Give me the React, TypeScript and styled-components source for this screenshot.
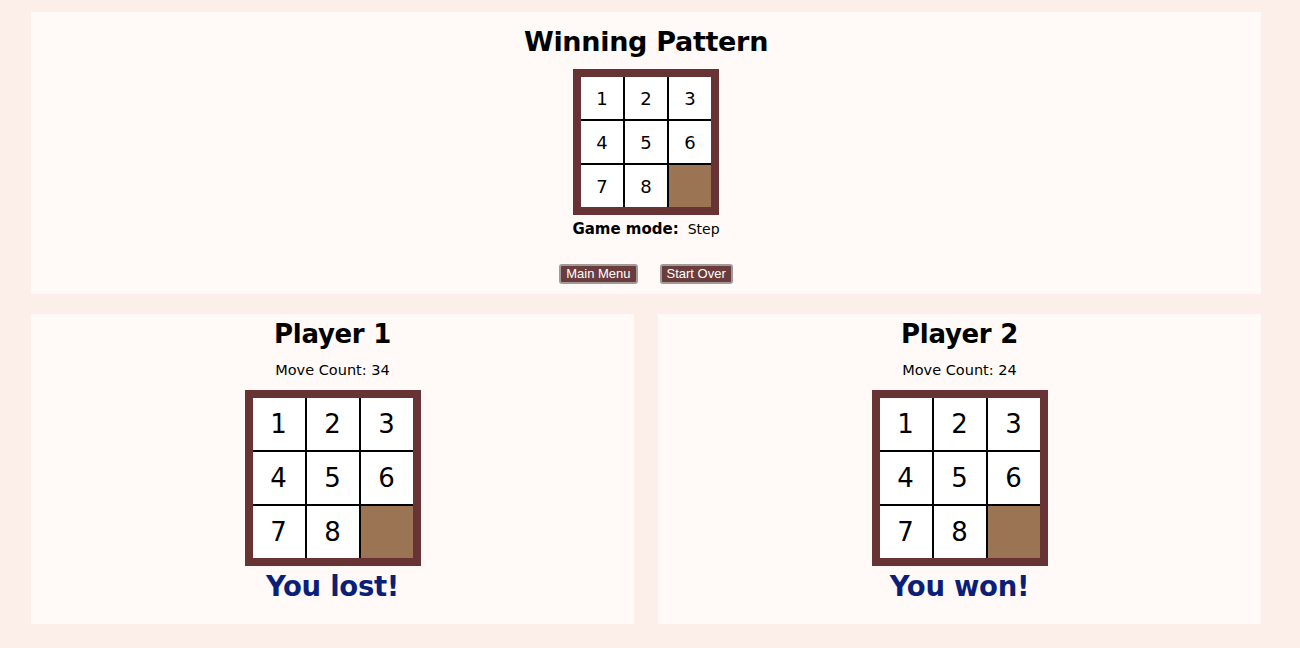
import React from "react";
import styled, { createGlobalStyle } from "styled-components";

const Global = createGlobalStyle`
  html, body { margin: 0; padding: 0; background: #fcefea; }
  body { font-family: "DejaVu Sans", "Noto Sans", sans-serif; color: #000; }
`;

const Page = styled.div`
  width: 1230px;
  padding: 12px 0 24px 31px;
  display: flex;
  flex-direction: column;
  gap: 20px;
`;

const Panel = styled.section<{ $h: number }>`
  background: #fffaf7;
  height: ${(p) => p.$h}px;
  display: flex;
  flex-direction: column;
  align-items: center;
  box-sizing: border-box;
`;

const Row = styled.div`
  display: grid;
  grid-template-columns: 1fr 1fr;
  gap: 24px;
`;

const Title = styled.h1<{ $size: number; $mt: number }>`
  margin: ${(p) => p.$mt}px 0 0;
  font-size: ${(p) => p.$size}px;
  line-height: 1;
  font-weight: 700;
  letter-spacing: -0.3px;
`;

const Board = styled.div<{ $cell: number }>`
  display: grid;
  grid-template-columns: repeat(3, ${(p) => p.$cell}px);
  grid-auto-rows: ${(p) => p.$cell}px;
  gap: 2px;
  background: #000;
  border: 8px solid #673334;
`;

const Cell = styled.div<{ $empty?: boolean; $font: number }>`
  background: ${(p) => (p.$empty ? "#9a7453" : "#fff")};
  display: flex;
  align-items: center;
  justify-content: center;
  font-size: ${(p) => p.$font}px;
  font-weight: 400;
`;

const Mode = styled.div`
  margin-top: 5px;
  display: flex;
  gap: 9px;
  align-items: baseline;
  b { font-weight: 700; font-size: 15px; }
  span { font-size: 14px; }
`;

const Buttons = styled.div`
  margin-top: 26px;
  display: flex;
  gap: 22px;
`;

const Btn = styled.button`
  font-family: "Liberation Sans", Arial, sans-serif;
  font-size: 13px;
  color: #fff;
  background: #6b3c3c;
  border: 2px solid #a09a98;
  border-radius: 3px;
  padding: 1px 5px;
  height: 20px;
  line-height: 14px;
`;

const Count = styled.div`
  margin-top: 15px;
  font-size: 14.5px;
`;

const Result = styled.div`
  margin-top: 4px;
  font-size: 27.5px;
  font-weight: 700;
  color: #0c1f78;
  letter-spacing: -0.3px;
`;

const tiles = [1, 2, 3, 4, 5, 6, 7, 8, 0];

function Puzzle({ cell, font, mt }: { cell: number; font: number; mt: number }) {
  return (
    <div style={{ marginTop: mt }}>
      <Board $cell={cell}>
        {tiles.map((t) => (
          <Cell key={t} $empty={t === 0} $font={font}>
            {t === 0 ? "" : t}
          </Cell>
        ))}
      </Board>
    </div>
  );
}

function PlayerPanel({ name, count, result }: { name: string; count: number; result: string }) {
  return (
    <Panel $h={310}>
      <Title $size={26} $mt={7}>{name}</Title>
      <Count>Move Count: {count}</Count>
      <Puzzle cell={52} font={26} mt={12} />
      <Result>{result}</Result>
    </Panel>
  );
}

export default function App() {
  return (
    <Page>
      <Global />
      <Panel $h={282}>
        <Title $size={27} $mt={16}>Winning Pattern</Title>
        <Puzzle cell={42} font={18} mt={14} />
        <Mode>
          <b>Game mode:</b>
          <span>Step</span>
        </Mode>
        <Buttons>
          <Btn>Main Menu</Btn>
          <Btn>Start Over</Btn>
        </Buttons>
      </Panel>
      <Row>
        <PlayerPanel name="Player 1" count={34} result="You lost!" />
        <PlayerPanel name="Player 2" count={24} result="You won!" />
      </Row>
    </Page>
  );
}
